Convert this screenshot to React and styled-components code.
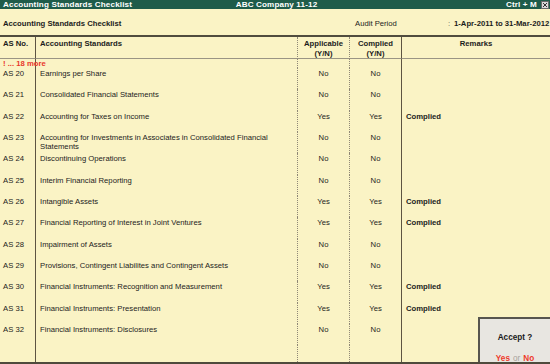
import React from "react";
import styled, { createGlobalStyle } from "styled-components";

const rows = [
  { no: "AS 20", name: "Earnings per Share", app: "No", comp: "No" },
  { no: "AS 21", name: "Consolidated Financial Statements", app: "No", comp: "No" },
  { no: "AS 22", name: "Accounting for Taxes on Income", app: "Yes", comp: "Yes", remark: "Complied" },
  {
    no: "AS 23",
    name: "Accounting for Investments in Associates in Consolidated Financial\nStatements",
    app: "No",
    comp: "No",
  },
  { no: "AS 24", name: "Discontinuing Operations", app: "No", comp: "No" },
  { no: "AS 25", name: "Interim Financial Reporting", app: "No", comp: "No" },
  { no: "AS 26", name: "Intangible Assets", app: "Yes", comp: "Yes", remark: "Complied" },
  { no: "AS 27", name: "Financial Reporting of Interest in Joint Ventures", app: "Yes", comp: "Yes", remark: "Complied" },
  { no: "AS 28", name: "Impairment of Assets", app: "No", comp: "No" },
  { no: "AS 29", name: "Provisions, Contingent Liabilites and Contingent Assets", app: "No", comp: "No" },
  { no: "AS 30", name: "Financial Instruments: Recognition and Measurement", app: "Yes", comp: "Yes", remark: "Complied" },
  { no: "AS 31", name: "Financial Instruments: Presentation", app: "Yes", comp: "Yes", remark: "Complied" },
  { no: "AS 32", name: "Financial Instruments: Disclosures", app: "No", comp: "No" },
];

const GlobalStyle = createGlobalStyle`
  html, body {
    margin: 0;
    padding: 0;
    background: #faf3c5;
  }
  body {
    font-family: "Liberation Sans", Arial, sans-serif;
    color: #1c1c1c;
  }
`;

const Screen = styled.div`
  position: relative;
  width: 550px;
  height: 364px;
  display: flex;
  flex-direction: column;
  overflow: hidden;
  background: #faf3c5;
  border-bottom: 2px solid #4f4a3c;
  box-sizing: border-box;
`;

const TitleBar = styled.div`
  height: 9px;
  display: grid;
  grid-template-columns: 1fr auto 1fr;
  align-items: center;
  padding-left: 3px;
  background-color: #1f5c4a;
  background-image: radial-gradient(#2c6b57 0.5px, transparent 0.6px);
  background-size: 2px 2px;
  color: #ffffff;
  font-size: 8.1px;
  font-weight: bold;
  line-height: 9px;
  letter-spacing: 0.15px;
  white-space: nowrap;
`;

const TitleRight = styled.div`
  display: flex;
  justify-content: flex-end;
  align-items: center;
  gap: 4px;
`;

const CloseBox = styled.span`
  width: 8px;
  height: 8px;
  display: flex;
  align-items: center;
  justify-content: center;
  background: #d9d9d9;
  border: 1px solid #6a6a6a;
  box-sizing: border-box;
  margin-right: 1px;
`;

const InfoRow = styled.div`
  height: 28px;
  display: flex;
  align-items: center;
  font-size: 7.7px;
  padding-left: 3px;
  padding-top: 2px;
  box-sizing: border-box;
  border-bottom: 2px solid #504c3e;
`;

const ReportName = styled.div`
  font-weight: bold;
  flex: 1;
`;

const PeriodLabel = styled.div`
  width: 93px;
`;

const Colon = styled.div`
  width: 6px;
  color: #555;
`;

const PeriodValue = styled.div`
  font-weight: bold;
  width: 96px;
`;

const Table = styled.div`
  flex: 1;
  display: grid;
  grid-template-columns: 36px 262px 52px 52px 1fr;
  grid-template-rows: 22px 9px repeat(13, 21.33px) 1fr;
  font-size: 7.7px;
  line-height: 9px;
`;

const lineFor = {
  0: "1px solid #5d5442",
  1: "1px dotted #8f8776",
  2: "1px dotted #8f8776",
  3: "1px solid #5d5442",
  4: "none",
};

const Cell = styled.div`
  border-right: ${(p) => lineFor[p.$col]};
  text-align: ${(p) => (p.$center ? "center" : "left")};
  padding-left: ${(p) => (p.$center ? 0 : p.$col === 0 ? 3 : 4)}px;
  font-weight: ${(p) => (p.$bold ? "bold" : "normal")};
  white-space: pre-line;
  min-width: 0;
`;

const HeadCell = styled(Cell)`
  font-weight: bold;
  padding-top: 2px;
  line-height: 9.5px;
  border-bottom: 1px solid #9a9484;
`;

const MoreCell = styled(Cell)`
  white-space: nowrap;
  color: #e8372b;
  font-weight: bold;
`;

const RowCell = styled(Cell)`
  padding-top: 1px;
`;

const AcceptBox = styled.div`
  position: absolute;
  right: 0;
  bottom: 0;
  width: 72px;
  height: 45px;
  box-sizing: border-box;
  background: #e8e6e1;
  border-top: 2px solid #57554f;
  border-left: 2px solid #57554f;
  display: flex;
  flex-direction: column;
  align-items: center;
  font-size: 8.2px;
  line-height: 9px;
`;

const AcceptTitle = styled.div`
  font-weight: bold;
  margin-top: 14px;
  color: #1a1a1a;
`;

const AcceptChoices = styled.div`
  margin-top: 12px;
  display: flex;
  gap: 3px;
`;

const Choice = styled.span`
  color: ${(p) => (p.$muted ? "#a8a49c" : "#ee3a2c")};
  font-weight: ${(p) => (p.$muted ? "normal" : "bold")};
`;

const App = () => {
  return (
    <>
      <GlobalStyle />
      <Screen>
        <TitleBar>
          <span>Accounting Standards Checklist</span>
          <span>ABC Company 11-12</span>
          <TitleRight>
            <span>Ctrl + M</span>
            <CloseBox>
              <svg width="6" height="6" viewBox="0 0 6 6">
                <path d="M1 1L5 5M5 1L1 5" stroke="#333" strokeWidth="1" />
              </svg>
            </CloseBox>
          </TitleRight>
        </TitleBar>

        <InfoRow>
          <ReportName>Accounting Standards Checklist</ReportName>
          <PeriodLabel>Audit Period</PeriodLabel>
          <Colon>:</Colon>
          <PeriodValue>1-Apr-2011 to 31-Mar-2012</PeriodValue>
        </InfoRow>

        <Table>
          <HeadCell $col={0}>AS No.</HeadCell>
          <HeadCell $col={1}>Accounting Standards</HeadCell>
          <HeadCell $col={2} $center>
            {"Applicable\n(Y/N)"}
          </HeadCell>
          <HeadCell $col={3} $center>
            {"Complied\n(Y/N)"}
          </HeadCell>
          <HeadCell $col={4} $center>
            Remarks
          </HeadCell>

          <MoreCell $col={0}>! ... 18 more</MoreCell>
          <Cell $col={1} />
          <Cell $col={2} />
          <Cell $col={3} />
          <Cell $col={4} />

          {rows.map((r) => (
            <React.Fragment key={r.no}>
              <RowCell $col={0}>{r.no}</RowCell>
              <RowCell $col={1}>{r.name}</RowCell>
              <RowCell $col={2} $center>
                {r.app}
              </RowCell>
              <RowCell $col={3} $center>
                {r.comp}
              </RowCell>
              <RowCell $col={4} $bold>
                {r.remark}
              </RowCell>
            </React.Fragment>
          ))}

          <Cell $col={0} />
          <Cell $col={1} />
          <Cell $col={2} />
          <Cell $col={3} />
          <Cell $col={4} />
        </Table>

        <AcceptBox>
          <AcceptTitle>Accept ?</AcceptTitle>
          <AcceptChoices>
            <Choice>Yes</Choice>
            <Choice $muted>or</Choice>
            <Choice>No</Choice>
          </AcceptChoices>
        </AcceptBox>
      </Screen>
    </>
  );
};

export default App;
